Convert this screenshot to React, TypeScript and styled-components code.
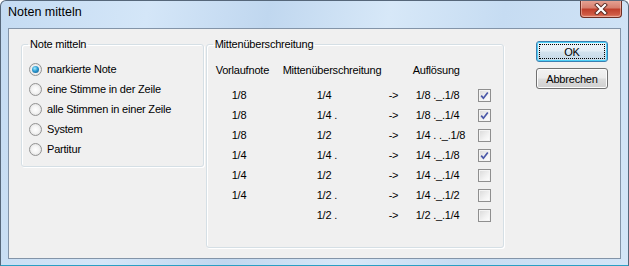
import styled, { createGlobalStyle } from "styled-components";

const GlobalStyle = createGlobalStyle`
  html, body { margin: 0; padding: 0; background: #ffffff; }
  body {
    font-family: "Liberation Sans", Arial, sans-serif;
    font-size: 11px;
    letter-spacing: -0.2px;
    color: #000;
  }
  * { box-sizing: border-box; }
`;

interface Row {
  lead: string;
  crossing: string;
  result: string;
  checked: boolean;
}

const rows: Row[] = [
  { lead: "1/8", crossing: "1/4", result: "1/8 ._.1/8", checked: true },
  { lead: "1/8", crossing: "1/4 .", result: "1/8 ._.1/4", checked: true },
  { lead: "1/8", crossing: "1/2", result: "1/4 . ._.1/8", checked: false },
  { lead: "1/4", crossing: "1/4 .", result: "1/4 ._.1/8", checked: true },
  { lead: "1/4", crossing: "1/2", result: "1/4 ._.1/4", checked: false },
  { lead: "1/4", crossing: "1/2 .", result: "1/4 ._.1/2", checked: false },
  { lead: "", crossing: "1/2 .", result: "1/2 ._.1/4", checked: false },
];

const options = [
  "markierte Note",
  "eine Stimme in der Zeile",
  "alle Stimmen in einer Zeile",
  "System",
  "Partitur",
];

export default function App() {
  return (
    <>
      <GlobalStyle />
      <Window>
        <TitleBar>
          <Title>Noten mitteln</Title>
          <CloseButton>
            <svg width="16" height="12" viewBox="0 0 16 12">
              <path
                d="M4 2 L12 10 M12 2 L4 10"
                stroke="#5a2a22"
                strokeWidth="4"
                strokeLinecap="square"
              />
              <path
                d="M4 2 L12 10 M12 2 L4 10"
                stroke="#ffffff"
                strokeWidth="2.2"
                strokeLinecap="square"
              />
            </svg>
          </CloseButton>
        </TitleBar>
        <Client>
          <LeftGroup>
            <Legend>Note mitteln</Legend>
            <RadioList>
              {options.map((label, i) => (
                <RadioRow key={label}>
                  <Radio $checked={i === 0} />
                  <span>{label}</span>
                </RadioRow>
              ))}
            </RadioList>
          </LeftGroup>
          <RightGroup>
            <Legend>Mittenüberschreitung</Legend>
            <Table>
              <HeadCell>Vorlaufnote</HeadCell>
              <HeadCell $col="2 / span 2">Mittenüberschreitung</HeadCell>
              <HeadCell $col="4 / span 2" $shift={-3}>
                Auflösung
              </HeadCell>
              {rows.map((r, i) => (
                <DataRow key={i}>
                  <LeadCell>{r.lead}</LeadCell>
                  <CrossCell>{r.crossing}</CrossCell>
                  <Cell>-&gt;</Cell>
                  <Cell>{r.result}</Cell>
                  <Checkbox $checked={r.checked}>
                    {r.checked && (
                      <svg width="11" height="11" viewBox="0 0 11 11">
                        <path
                          d="M2.2 5.6 L4.4 8.2 L8.8 2.4"
                          fill="none"
                          stroke="#4a58a8"
                          strokeWidth="1.7"
                        />
                      </svg>
                    )}
                  </Checkbox>
                </DataRow>
              ))}
            </Table>
          </RightGroup>
          <ButtonColumn>
            <Button $default>OK</Button>
            <Button>Abbrechen</Button>
          </ButtonColumn>
        </Client>
      </Window>
    </>
  );
}

const Window = styled.div`
  width: 629px;
  height: 266px;
  display: flex;
  flex-direction: column;
  border: 1px solid #56677a;
  border-bottom-color: #2a9fc4;
  border-radius: 6px 6px 0 0;
  background: linear-gradient(
    100deg,
    #c4dbf2 0%,
    #d4e6f8 22%,
    #c0d7ef 40%,
    #d7e8f8 58%,
    #c6dcf2 75%,
    #d3e5f7 100%
  );
  overflow: hidden;
`;

const TitleBar = styled.div`
  height: 27px;
  flex: none;
  display: flex;
  align-items: flex-start;
  padding-left: 7px;
`;

const Title = styled.div`
  margin-top: 4px;
  font-size: 12.5px;
  line-height: 15px;
  letter-spacing: 0;
  color: #000;
`;

const CloseButton = styled.div`
  margin-left: auto;
  margin-right: 6px;
  margin-top: -1px;
  width: 42px;
  height: 18px;
  display: flex;
  align-items: center;
  justify-content: center;
  border: 1px solid #6e2e24;
  border-top: none;
  border-radius: 0 0 4px 4px;
  background: linear-gradient(
    to bottom,
    #e7a596 0%,
    #d7806f 45%,
    #c0402c 55%,
    #cf5a44 85%,
    #e2866e 100%
  );
  box-shadow: inset 0 0 0 1px rgba(255, 220, 210, 0.45);
`;

const Client = styled.div`
  flex: 1;
  margin: 0 7px 6px;
  border: 1px solid #8394a8;
  background: #f0f0f0;
  display: flex;
  align-items: flex-start;
  padding: 9px 12px 0;
`;

const Group = styled.fieldset`
  margin: 0;
  padding: 0 6px;
  border: 1px solid #d5dfe5;
  border-radius: 3px;
  box-shadow: inset 1px 1px 0 #ffffff, 1px 1px 0 #ffffff;
`;

const LeftGroup = styled(Group)`
  width: 183px;
  padding-bottom: 7px;
`;

const RightGroup = styled(Group)`
  width: 299px;
  margin-left: 2px;
  padding-bottom: 22px;
`;

const Legend = styled.legend`
  padding: 0 2px;
  margin: 0;
  line-height: 13px;
`;

const RadioList = styled.div`
  padding: 8px 0 0 1px;
  display: flex;
  flex-direction: column;
`;

const RadioRow = styled.div`
  height: 20px;
  display: flex;
  align-items: center;
  gap: 5px;
`;

const Radio = styled.span<{ $checked?: boolean }>`
  width: 13px;
  height: 13px;
  flex: none;
  border-radius: 50%;
  border: 1px solid #939393;
  background: radial-gradient(circle at 50% 50%, #ffffff 0%, #f4f4f4 45%, #d6d6d6 100%);
  display: flex;
  align-items: center;
  justify-content: center;
  &::before {
    content: "";
    display: ${(p) => (p.$checked ? "block" : "none")};
    width: 7px;
    height: 7px;
    border-radius: 50%;
    background: radial-gradient(circle at 40% 35%, #a6ecff 0%, #2b9ad0 45%, #0d4f85 100%);
  }
`;

const Table = styled.div`
  padding: 9px 0 0 3px;
  display: grid;
  grid-template-columns: 67px 106px 27px 62px 13px;
  grid-template-rows: 25px;
  grid-auto-rows: 20px;
  align-items: center;
`;

const HeadCell = styled.div<{ $col?: string; $shift?: number }>`
  white-space: nowrap;
  grid-row: 1;
  grid-column: ${(p) => p.$col ?? "1"};
  margin-left: ${(p) => p.$shift ?? 0}px;
  align-self: start;
  line-height: 20px;
`;

const DataRow = styled.div`
  display: contents;
`;

const Cell = styled.div`
  white-space: nowrap;
`;

const LeadCell = styled(Cell)`
  padding-left: 16px;
`;

const CrossCell = styled(Cell)`
  padding-left: 34px;
`;

const Checkbox = styled.span<{ $checked?: boolean }>`
  width: 13px;
  height: 13px;
  border: 1px solid #8f8f8f;
  background: linear-gradient(135deg, #d9d9d9 0%, #f2f2f2 60%, #ffffff 100%);
  box-shadow: inset 0 0 0 1px #f4f4f4;
  display: flex;
  align-items: center;
  justify-content: center;
`;

const ButtonColumn = styled.div`
  margin-left: 32px;
  margin-top: 3px;
  display: flex;
  flex-direction: column;
  gap: 6px;
`;

const Button = styled.div<{ $default?: boolean }>`
  position: relative;
  width: 72px;
  height: 21px;
  display: flex;
  align-items: center;
  justify-content: center;
  border: 1px solid ${(p) => (p.$default ? "#3c7fb1" : "#707070")};
  border-radius: 3px;
  background: ${(p) =>
    p.$default
      ? "linear-gradient(to bottom, #eef5fa 0%, #e3edf5 48%, #d2e2ee 52%, #c6d9e8 100%)"
      : "linear-gradient(to bottom, #f2f2f2 0%, #ebebeb 48%, #dddddd 52%, #cfcfcf 100%)"};
  box-shadow: ${(p) =>
    p.$default ? "inset 0 0 0 1px #4fd0f7" : "inset 0 0 0 1px #fcfcfc"};
  &::after {
    content: "";
    display: ${(p) => (p.$default ? "block" : "none")};
    position: absolute;
    inset: 2px;
    border: 1px dotted #000;
  }
`;
